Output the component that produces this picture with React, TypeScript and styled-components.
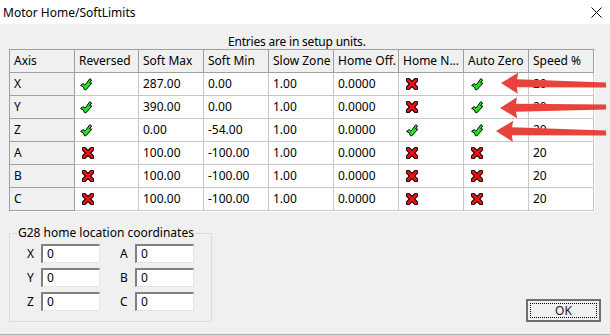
import React from 'react'
import styled, { createGlobalStyle } from 'styled-components'

const GlobalStyle = createGlobalStyle`
  html, body {
    margin: 0;
    padding: 0;
    background: #f0f0f0;
  }
  body {
    font-family: 'Noto Sans', 'Liberation Sans', sans-serif;
    font-size: 12px;
    color: #000;
  }
`

const StyledWindow = styled.div`
  position: relative;
  display: flex;
  flex-direction: column;
  width: 610px;
  height: 335px;
  box-sizing: border-box;
  background: #f0f0f0;
  border-bottom: 1px solid #b4b4b4;
  overflow: hidden;
`

const StyledTitleBar = styled.div`
  display: flex;
  align-items: center;
  justify-content: space-between;
  height: 24px;
  padding: 0 8px 0 3px;
  background: #fff;
  font-size: 12px;
`

const StyledContent = styled.div`
  display: flex;
  flex-direction: column;
  flex: 1;
  padding: 0 9px 0 9px;
`

const StyledCaption = styled.div`
  padding: 11px 0 0 219px;
  line-height: 14px;
  height: 14px;
  letter-spacing: -0.2px;
`

const StyledGridFrame = styled.div`
  align-self: flex-start;
  border-top: 1px solid #a0a0a0;
  border-left: 1px solid #a0a0a0;
  border-right: 1px solid #fff;
  border-bottom: 1px solid #fff;
`

const StyledTable = styled.table`
  border-collapse: separate;
  border-spacing: 0;
  table-layout: fixed;
`

const StyledCell = styled.td<{ $fixed?: boolean; $icon?: boolean }>`
  height: 22px;
  padding: 0 0 0 ${(p) => (p.$icon ? '7px' : '4px')};
  line-height: 14px;
  white-space: nowrap;
  overflow: hidden;
  vertical-align: middle;
  font-weight: normal;
  text-align: left;
  background: ${(p) => (p.$fixed ? '#f0f0f0' : '#fff')};
  border-right: 1px solid ${(p) => (p.$fixed ? '#a0a0a0' : '#c8c8c8')};
  border-bottom: 1px solid ${(p) => (p.$fixed ? '#a0a0a0' : '#c8c8c8')};

  svg {
    display: block;
  }
`

const StyledBottom = styled.div`
  display: flex;
  justify-content: space-between;
  align-items: flex-end;
  margin-top: 14px;
`

const StyledGroup = styled.fieldset`
  width: 203px;
  box-sizing: border-box;
  margin: 0;
  padding: 4px 0 10px 17px;
  border: 1px solid #dcdcdc;

  legend {
    padding: 0 1px;
    margin-left: -10px;
    line-height: 14px;
    white-space: nowrap;
  }
`

const StyledCoordGrid = styled.div`
  display: grid;
  grid-template-columns: 14px 79px 15px 59px;
  row-gap: 5px;
  align-items: center;
`

const StyledLabel = styled.span`
  line-height: 14px;
`

const StyledInput = styled.div`
  width: 59px;
  height: 19px;
  box-sizing: border-box;
  padding-left: 4px;
  line-height: 15px;
  background: #fff;
  border-top: 2px solid #808080;
  border-left: 2px solid #808080;
  border-right: 1px solid #e3e3e3;
  border-bottom: 1px solid #e3e3e3;
`

const StyledOkButton = styled.div`
  width: 75px;
  height: 23px;
  box-sizing: border-box;
  margin-bottom: 0px;
  padding: 2px;
  border: 2px solid #6e6e6e;
  background: #f0f0f0;

  div {
    height: 100%;
    box-sizing: border-box;
    border: 1px dotted #000;
    display: flex;
    align-items: center;
    justify-content: center;
    font-size: 12px;
    color: #1a1a2a;
  }
`

const StyledArrows = styled.svg`
  position: absolute;
  left: 0;
  top: 0;
  pointer-events: none;
`

const CheckIcon = () => (
  <svg width="13" height="13" viewBox="0 0 13 13">
    <polygon
      points="0.6,7.4 3.2,5.6 5,7.2 9.8,0.7 11.6,2 9.6,4.6 11.8,5.2 5.8,11.9 4.4,11.6 3.4,9"
      fill="#1ee81e"
      stroke="#000"
      strokeWidth="1"
      strokeLinejoin="round"
    />
  </svg>
)

const CrossIcon = () => (
  <svg width="12" height="12" viewBox="0 0 12 12">
    <g strokeLinecap="round">
      <line x1="2" y1="2" x2="10" y2="10" stroke="#000" strokeWidth="4.6" />
      <line x1="10" y1="2" x2="2" y2="10" stroke="#000" strokeWidth="4.6" />
      <line x1="2" y1="2" x2="10" y2="10" stroke="#ee1111" strokeWidth="2.6" />
      <line x1="10" y1="2" x2="2" y2="10" stroke="#ee1111" strokeWidth="2.6" />
    </g>
  </svg>
)

const CloseIcon = () => (
  <svg width="11" height="11" viewBox="0 0 11 11">
    <path d="M0.5 0.5 L10.5 10.5 M10.5 0.5 L0.5 10.5" stroke="#000" strokeWidth="1" />
  </svg>
)

const columns = [
  { title: 'Axis', width: 65 },
  { title: 'Reversed', width: 64 },
  { title: 'Soft Max', width: 65 },
  { title: 'Soft Min', width: 65 },
  { title: 'Slow Zone', width: 65 },
  { title: 'Home Off.', width: 65 },
  { title: 'Home N...', width: 65 },
  { title: 'Auto Zero', width: 65 },
  { title: 'Speed %', width: 65 },
]

const rows = [
  { axis: 'X', reversed: true, max: '287.00', min: '0.00', homeNeg: false, autoZero: true },
  { axis: 'Y', reversed: true, max: '390.00', min: '0.00', homeNeg: false, autoZero: true },
  { axis: 'Z', reversed: true, max: '0.00', min: '-54.00', homeNeg: true, autoZero: true },
  { axis: 'A', reversed: false, max: '100.00', min: '-100.00', homeNeg: false, autoZero: false },
  { axis: 'B', reversed: false, max: '100.00', min: '-100.00', homeNeg: false, autoZero: false },
  { axis: 'C', reversed: false, max: '100.00', min: '-100.00', homeNeg: false, autoZero: false },
]

const coords = [
  ['X', 'A'],
  ['Y', 'B'],
  ['Z', 'C'],
]

// annotation arrows drawn over the grid
const arrowPoints = (tx: number, ty: number, ex: number, ey: number) => {
  const dx = ex - tx
  const dy = ey - ty
  const len = Math.hypot(dx, dy)
  const ux = dx / len
  const uy = dy / len
  const nx = -uy
  const ny = ux
  const head = 17
  const headW = 10.5
  const shaftHead = 4
  const shaftTail = 2.5
  const bx = tx + ux * head
  const by = ty + uy * head
  const pts = [
    [tx, ty],
    [bx + nx * headW, by + ny * headW],
    [bx - ux * 1 + nx * shaftHead, by - uy * 1 + ny * shaftHead],
    [ex + nx * shaftTail, ey + ny * shaftTail],
    [ex - nx * shaftTail, ey - ny * shaftTail],
    [bx - ux * 1 - nx * shaftHead, by - uy * 1 - ny * shaftHead],
    [bx - nx * headW, by - ny * headW],
  ]
  return pts.map((p) => p.map((v) => v.toFixed(1)).join(',')).join(' ')
}

const arrows = [
  { tx: 501, ty: 83, ex: 606, ey: 85 },
  { tx: 500, ty: 108, ex: 606, ey: 107 },
  { tx: 496, ty: 131, ex: 606, ey: 133 },
]

export default function App() {
  return (
    <StyledWindow>
      <GlobalStyle />
      <StyledTitleBar>
        <span>Motor Home/SoftLimits</span>
        <CloseIcon />
      </StyledTitleBar>

      <StyledContent>
        <StyledCaption>Entries are in setup units.</StyledCaption>

        <StyledGridFrame>
          <StyledTable>
            <colgroup>
              {columns.map((c) => (
                <col key={c.title} style={{ width: c.width }} />
              ))}
            </colgroup>
            <thead>
              <tr>
                {columns.map((c) => (
                  <StyledCell as="th" key={c.title} $fixed>
                    {c.title}
                  </StyledCell>
                ))}
              </tr>
            </thead>
            <tbody>
              {rows.map((r) => (
                <tr key={r.axis}>
                  <StyledCell $fixed>{r.axis}</StyledCell>
                  <StyledCell $icon style={{ paddingLeft: r.reversed ? 5 : 7 }}>
                    {r.reversed ? <CheckIcon /> : <CrossIcon />}
                  </StyledCell>
                  <StyledCell>{r.max}</StyledCell>
                  <StyledCell>{r.min}</StyledCell>
                  <StyledCell>1.00</StyledCell>
                  <StyledCell>0.0000</StyledCell>
                  <StyledCell $icon>{r.homeNeg ? <CheckIcon /> : <CrossIcon />}</StyledCell>
                  <StyledCell $icon>{r.autoZero ? <CheckIcon /> : <CrossIcon />}</StyledCell>
                  <StyledCell>20</StyledCell>
                </tr>
              ))}
            </tbody>
          </StyledTable>
        </StyledGridFrame>

        <StyledBottom>
          <StyledGroup>
            <legend>G28 home location coordinates</legend>
            <StyledCoordGrid>
              {coords.map(([a, b]) => (
                <React.Fragment key={a}>
                  <StyledLabel>{a}</StyledLabel>
                  <StyledInput>0</StyledInput>
                  <StyledLabel>{b}</StyledLabel>
                  <StyledInput>0</StyledInput>
                </React.Fragment>
              ))}
            </StyledCoordGrid>
          </StyledGroup>

          <StyledOkButton>
            <div>OK</div>
          </StyledOkButton>
        </StyledBottom>
      </StyledContent>

      <StyledArrows width="610" height="335" viewBox="0 0 610 335">
        {arrows.map((a, i) => (
          <polygon key={i} points={arrowPoints(a.tx, a.ty, a.ex, a.ey)} fill="#e7433a" />
        ))}
      </StyledArrows>
    </StyledWindow>
  )
}
